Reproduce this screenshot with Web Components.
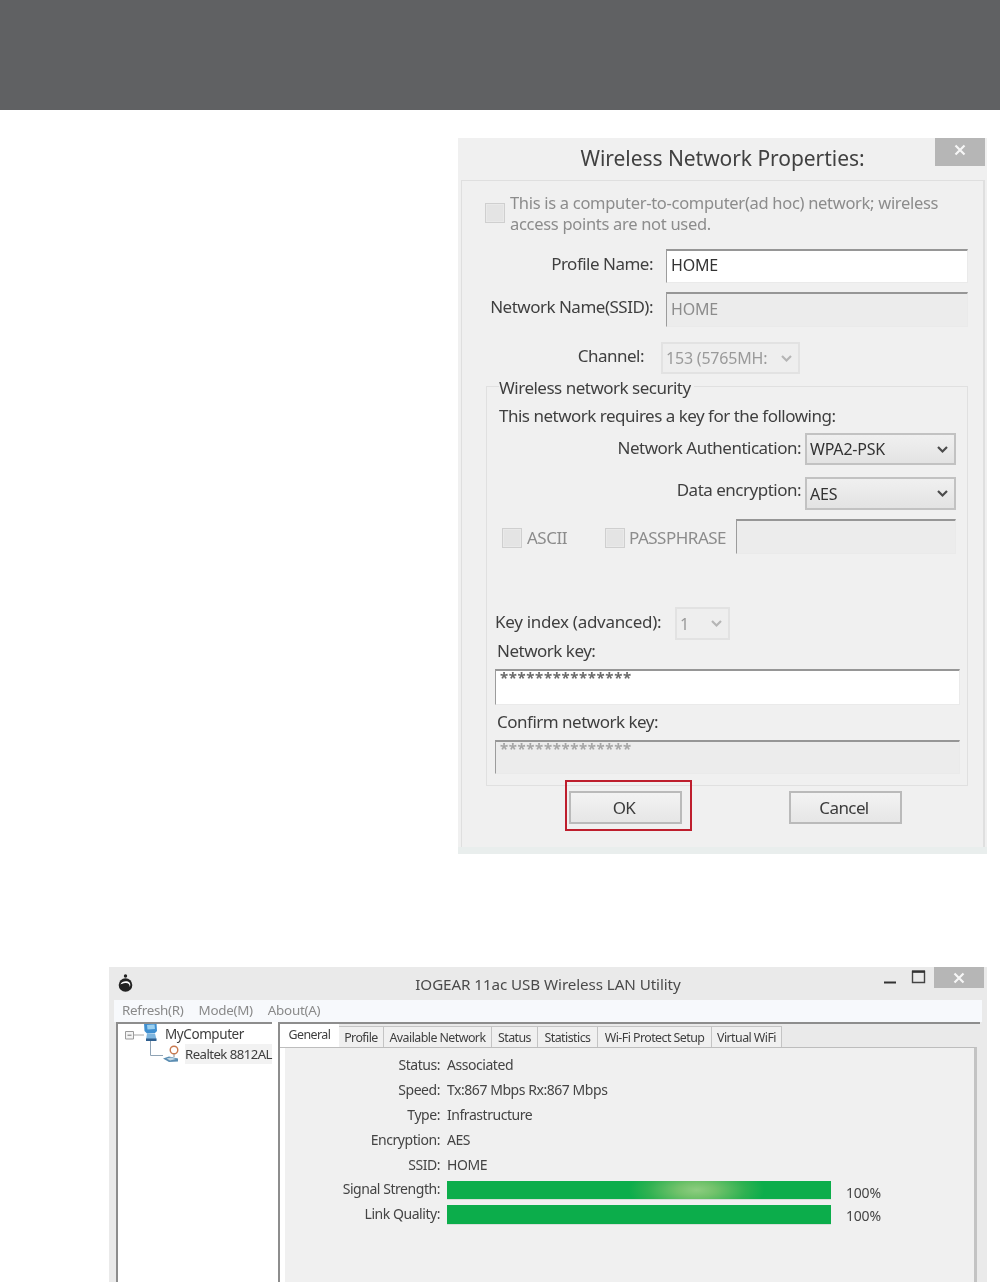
<!DOCTYPE html>
<html lang="en"><head><meta charset="utf-8"><title>Wireless Network Properties</title>
<style>
html,body{margin:0;padding:0;background:#fff}
body{width:1000px;height:1282px;overflow:hidden;font-family:"Noto Sans","Open Sans",sans-serif;color:#444}
</style></head><body>
<page-shell>
  <wireless-dialog slot="top"></wireless-dialog>
  <utility-window slot="bottom"></utility-window>
</page-shell>
<script>
const def=(name,css,html)=>{
  customElements.define(name,class extends HTMLElement{
    constructor(){super();const s=this.attachShadow({mode:'open'});
      s.innerHTML=`<style>${css}</style>${html}`;}
    connectedCallback(){
      this.shadowRoot.querySelectorAll('[data-attr]').forEach(e=>{e.textContent=this.getAttribute(e.dataset.attr)||''});
    }
  });
};
def('page-shell',`
:host{display:flex;flex-direction:column;width:1000px;height:1282px;overflow:hidden}
.band{height:110px;background:#606163;flex:none}
.a{padding:28px 0 0 458px;flex:none}
.b{padding:113px 0 0 109px;flex:none}
`,`<div class="band"></div><div class="a"><slot name="top"></slot></div><div class="b"><slot name="bottom"></slot></div>`);

def('win-close',`
:host{display:flex;align-items:center;justify-content:center;background:#b6b6b6;flex:none;padding-bottom:var(--up,0);box-sizing:border-box}
svg{display:block}
`,`<svg width="14" height="12" viewBox="0 0 14 12"><path d="M2.5 1.5 11.5 10.5M11.5 1.5 2.5 10.5" stroke="#f6f6f6" stroke-width="2.2" fill="none"/></svg>`);

def('check-box',`
:host{display:inline-block;width:18px;height:18px;border:1px solid #cfcfcf;background:#e4e4e4;flex:none;box-shadow:inset 0 0 0 1px #e9e9e9}
`,``);

def('text-box',`
:host{display:block;box-sizing:border-box;flex:none;background:var(--bg,#fff);border-top:2px solid #969696;border-left:1px solid #9c9c9c;border-right:1px solid #eaeaea;border-bottom:1px solid #eaeaea;padding:var(--pad,4px 0 0 4px);font-size:var(--fs,16px);line-height:var(--lh,22px);color:var(--fg,#333);white-space:nowrap;letter-spacing:var(--ls,-.2px);font-weight:var(--fw,400)}
`,`<slot></slot>`);

def('combo-box',`
:host{display:flex;box-sizing:border-box;align-items:center;justify-content:space-between;flex:none;background:var(--bg,linear-gradient(#f0f0f0,#e3e3e3));border:2px solid var(--bc,#c2c2c2);padding:0 5px 0 3px;font-size:16px;color:var(--fg,#333);white-space:nowrap;overflow:hidden;letter-spacing:-.2px}
svg{flex:none;display:block}
`,`<span><slot></slot></span><svg width="13" height="9" viewBox="0 0 13 9"><path d="M2 2 6.5 6.5 11 2" fill="none" stroke="var(--ch,#4b4b4b)" stroke-width="2.2"/></svg>`);

def('push-button',`
:host{display:flex;box-sizing:border-box;position:relative;align-items:center;justify-content:center;flex:none;width:113px;height:33px;background:linear-gradient(#f3f3f3,#e6e6e6);border:2px solid #bababa;font-size:17px;color:#3c3c3c;letter-spacing:-.6px;padding-right:3px}
:host([marked])::after{content:"";position:absolute;left:-6px;top:-13px;width:123px;height:47px;border:2px solid #be1e2d}
`,`<slot></slot>`);

def('form-row',`
:host{display:flex;align-items:center;font-size:17px;color:#3f3f3f;letter-spacing:-.5px}
.l{flex:none;text-align:right;white-space:nowrap}
`,`<span class="l"><slot name="label"></slot></span><slot></slot>`);

def('wireless-dialog',`
:host{display:block;width:529px;height:716px;background:#f0f0f0;font-family:"Noto Sans","Open Sans",sans-serif;filter:blur(.45px)}
.title{display:flex;height:42px;box-sizing:border-box;position:relative;justify-content:center;padding:5px 0 0 0;font-size:21px;line-height:30px;color:#414141;letter-spacing:-.05px}
win-close{position:absolute;right:2px;top:0;width:50px;height:28px;--up:4px}
.panel{box-sizing:border-box;margin:0 2px 0 3px;height:667px;border:1px solid #dfdfdf;border-width:1px 2px 0 1px;padding:11px 0 0 23px}
.foot{height:7px;background:#e9eeed}
.adhoc{display:flex;font-size:16.5px;line-height:21px;color:#8c8c8c;letter-spacing:-.3px;height:53px;margin-bottom:4px}
.adhoc check-box{margin:11px 5px 0 0}
.fs{box-sizing:border-box;width:482px;height:400px;margin:12px 0 0 1px;border:1px solid #e0e0e0;padding:0 0 0 12px;font-size:17px;color:#3f3f3f;letter-spacing:-.5px}
.legend{display:table;background:#f0f0f0;margin:-11px 0 0 0;line-height:23px;padding-right:3px}
.need{line-height:23px;margin-top:5px}
.ra{display:flex;align-items:center;justify-content:flex-end;width:457px}
.ra span{margin-right:4px}
.ascii{display:flex;align-items:center;color:#8c8c8c;margin:9px 0 0 3px;height:35px}
.ascii check-box{position:relative;top:1px}
.ascii span{position:relative;top:1px}
.keys{margin:53px 0 0 -4px}
.keys .sm{line-height:23px;padding-left:2px}
.btns{display:flex;margin:2px 0 0 84px;gap:107px;padding-top:3px}
`,`
<div class="title">Wireless Network Properties:<win-close></win-close></div>
<div class="panel">
 <div class="adhoc"><check-box></check-box><div>This is a computer-to-computer(ad hoc) network; wireless<br>access points are not used.</div></div>
 <form-row style="height:34px"><span slot="label" style="width:168px;display:block;margin-right:13px;padding-bottom:6px">Profile Name:</span><text-box style="width:302px;height:34px;--pad:3px 0 0 4px">HOME</text-box></form-row>
 <form-row style="height:35px;margin-top:9px"><span slot="label" style="width:168px;display:block;margin-right:13px;padding-bottom:6px">Network Name(SSID):</span><text-box style="width:302px;height:35px;--bg:#ececec;--fg:#8c8c8c">HOME</text-box></form-row>
 <form-row style="height:32px;margin-top:15px"><span slot="label" style="width:159px;display:block;margin-right:17px;padding-bottom:5px">Channel:</span><combo-box style="width:139px;height:32px;--bc:#e2e2e2;--bg:#eee;--fg:#9a9a9a;--ch:#b5b5b5">153 (5765MH:</combo-box></form-row>
 <div class="fs">
  <div class="legend">Wireless network security</div>
  <div class="need">This network requires a key for the following:</div>
  <div class="ra" style="height:32px;margin-top:6px"><span style="padding-bottom:4px">Network Authentication:</span><combo-box style="width:151px;height:32px">WPA2-PSK</combo-box></div>
  <div class="ra" style="height:33px;margin-top:12px"><span style="padding-bottom:9px">Data encryption:</span><combo-box style="width:151px;height:33px">AES</combo-box></div>
  <div class="ascii"><check-box></check-box><span style="margin:0 38px 0 5px">ASCII</span><check-box></check-box><span style="margin:0 10px 0 4px">PASSPHRASE</span><text-box style="width:220px;height:35px;--bg:#ececec"></text-box></div>
  <div class="keys">
   <div style="display:flex;align-items:center;height:33px"><span style="width:180px;white-space:nowrap;letter-spacing:-.3px;padding-bottom:4px">Key index (advanced):</span><combo-box style="width:55px;height:33px;--bc:#e2e2e2;--bg:#eee;--fg:#9a9a9a;--ch:#b5b5b5">1</combo-box></div>
   <div class="sm" style="margin-top:-1px">Network key:</div>
   <text-box style="width:465px;height:36px;margin-top:7px;--pad:0 0 0 4px;--lh:13px;--fs:15px;--ls:.65px;--fg:#6a6a6a;--fw:700">***************</text-box>
   <div class="sm" style="margin-top:5px">Confirm network key:</div>
   <text-box style="width:465px;height:34px;margin-top:7px;--bg:#ececec;--pad:0 0 0 4px;--lh:13px;--fs:15px;--ls:.65px;--fg:#a5a5a5;--fw:700">***************</text-box>
  </div>
 </div>
 <div class="btns"><push-button marked>OK</push-button><push-button>Cancel</push-button></div>
</div>
<div class="foot"></div>`);

def('stat-row',`
:host{display:flex;align-items:center;height:25px;font-size:14px;color:#444;letter-spacing:-.45px;white-space:nowrap}
.l{flex:none;width:155px;text-align:right;margin-right:7px}
:host([lift]) .l{padding-bottom:2px}
`,`<span class="l" data-attr="label"></span><slot></slot>`);

def('level-bar',`
:host{display:block;flex:none;width:384px;height:18px;background:#0cad4b;box-shadow:0 1px 0 #d8ded9}
:host([glow]){background:radial-gradient(ellipse 68px 26px at 65% 50%,#8dcd80 0,#72c26b 28%,#2eb151 72%,#0cad4b 100%)}
`,``);

def('utility-window',`
:host{display:block;width:878px;height:315px;background:#eaeaea;overflow:hidden;font-family:"Noto Sans","Open Sans",sans-serif;filter:blur(.4px)}
.tb{display:flex;align-items:center;height:33px;position:relative;justify-content:center;font-size:15.2px;color:#4a4a4a;letter-spacing:-.08px}
.logo{position:absolute;left:8px;top:6px}
.ctl{position:absolute;right:3px;top:0;display:flex}
.ctl svg{display:block}
win-close{width:50px;height:21px}
.menu{display:flex;box-sizing:border-box;height:22px;margin:0 5px 0 5px;background:#f7f9fc;font-size:13.4px;line-height:21px;color:#8a8a8a;padding-left:8px;letter-spacing:-.28px}
.menu span{margin-right:15px}
.body{display:flex;padding:0 0 0 7px;height:260px}
.tree{box-sizing:border-box;width:162px;height:260px;background:#fff;border-left:2px solid #8d8d8d;padding-top:2px;position:relative;font-size:13.5px;color:#3e3e3e;letter-spacing:-.42px}
.tree::before{content:"";position:absolute;left:-2px;top:0;width:156px;height:2px;background:#8d8d8d}
.tree svg{display:block;flex:none;overflow:visible}
.node{display:flex;height:20px;line-height:20px;white-space:nowrap}
.tabs{box-sizing:border-box;width:702px;height:260px;border-top:2px solid #8d8d8d;position:relative;margin-left:0}
.tabin{border-left:2px solid #8d8d8d;height:258px}
.strip{display:flex;height:23px;font-size:12.4px;letter-spacing:-.55px;color:#3f3f3f}
.strip span{display:flex;box-sizing:border-box;align-items:center;justify-content:center;background:#f0f0f0;border:1px solid #c4c4c4;border-bottom:0;border-left:0;margin-top:2px;white-space:nowrap}
.strip span.on{background:#fff;border:0;margin-top:0;padding-bottom:3px}
.pane{box-sizing:border-box;width:697px;height:235px;background:#fff;border-top:1px solid #bdbdbd;border-right:3px solid #c3c3c3;padding:0 0 0 5px}
.inner{background:#f0f0f0;height:240px;padding-top:4px}
.pct{font-size:14px;margin-left:15px;color:#444;letter-spacing:-.2px}
`,`
<div class="tb">
 <svg class="logo" width="17" height="20" viewBox="0 0 17 20"><circle cx="8.5" cy="12" r="6.8" fill="#222"/><path d="M3.4 11.5C4.5 8.8 8 7.6 11 8.6 13.4 9.6 14 12.4 12.6 14 13 11.4 11 9.8 8.4 10 6 10.2 4.4 11 3.4 11.5Z" fill="#fff"/><circle cx="8.5" cy="3" r="1.7" fill="#222"/></svg>
 <span>IOGEAR 11ac USB Wireless LAN Utility</span>
 <div class="ctl">
  <svg width="50" height="21" viewBox="0 0 50 21"><path d="M0 15.5H12" stroke="#333" stroke-width="2"/><path d="M28.5 4.5H40.5V15.5H28.5Z" fill="none" stroke="#444" stroke-width="1.4"/><path d="M28 4.6H41" stroke="#333" stroke-width="2.4"/></svg>
  <win-close></win-close>
 </div>
</div>
<div class="menu"><span>Refresh(R)</span><span>Mode(M)</span><span>About(A)</span></div>
<div class="body">
 <div class="tree">
  <div class="node" style="padding-left:5px">
   <svg style="margin-top:-2px" width="42" height="22" viewBox="0 0 42 22">
    <path d="M2.5 9.5h8v7.5h-8z" fill="#f4f4f4" stroke="#9a9a9a"/><path d="M4.5 13.2h4" stroke="#777"/><path d="M10.5 13H21" stroke="#a6a6a6"/><path d="M27.5 17V33.5H40" fill="none" stroke="#8fa3b5"/>
    <path d="M21 1.5 33.5 1 34 9 32 11 24 11.5 21.5 9Z" fill="#3f8fd0"/><path d="M24 3 31.5 2.6 32 7 24.5 7.4Z" fill="#9bd0f0"/><path d="M24 11.5h8l1.5 6H23Z" fill="#7fb6df"/><path d="M23 16.5h10.5V19H23Z" fill="#2f5f8f"/>
   </svg>
   <span>MyComputer</span>
  </div>
  <div class="node" style="padding-left:45px">
   <svg width="22" height="20" viewBox="0 0 22 20">
    <circle cx="11" cy="6" r="3.8" fill="#fff" stroke="#c8794f" stroke-width="1.4"/><path d="M11 10v3" stroke="#8a8a8a"/><path d="M0 14.5 6 12.5 15 14.5 15 17.5 6 18Z" fill="#5b8db2"/><path d="M3.5 14.6 8 13.6 13 15 7 16.4Z" fill="#c4d9e6"/>
   </svg>
   <span style="width:87px;background:#f2f2f2;font-size:13.2px;letter-spacing:-.55px">Realtek 8812AL</span>
  </div>
 </div>
 <div class="tabs"><div class="tabin">
  <div class="strip">
   <span class="on" style="width:59px">General</span><span style="width:45px">Profile</span><span style="width:108px">Available Network</span><span style="width:46px">Status</span><span style="width:60px">Statistics</span><span style="width:114px">Wi-Fi Protect Setup</span><span style="width:70px">Virtual WiFi</span>
  </div>
  <div class="pane"><div class="inner">
   <stat-row label="Status:">Associated</stat-row>
   <stat-row label="Speed:">Tx:867 Mbps Rx:867 Mbps</stat-row>
   <stat-row label="Type:">Infrastructure</stat-row>
   <stat-row label="Encryption:">AES</stat-row>
   <stat-row label="SSID:">HOME</stat-row>
   <stat-row label="Signal Strength:" lift><level-bar glow></level-bar><span class="pct" style="padding-top:6px">100%</span></stat-row>
   <stat-row label="Link Quality:" lift><level-bar style="height:19px"></level-bar><span class="pct" style="padding-top:2px">100%</span></stat-row>
  </div></div>
 </div></div>
</div>`);
</script>
</body></html>
